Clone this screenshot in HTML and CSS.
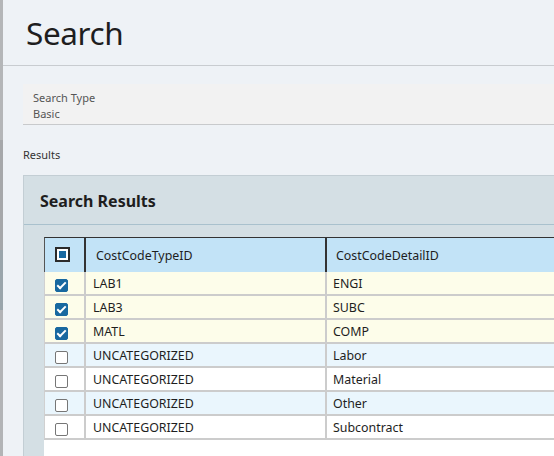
FILE: index.html
```html
<!DOCTYPE html>
<html>
<head>
<meta charset="utf-8">
<link rel="stylesheet" href="styles.css">
</head>
<body>
<div class="screen">
  <div class="backdrop"></div>
  <div class="panel">
    <div class="page-head">
      <h1 class="title">Search</h1>
    </div>
    <div class="content">
      <div class="field">
        <div class="field-label">Search Type</div>
        <div class="field-value">Basic</div>
      </div>
      <div class="section-label">Results</div>
      <div class="card">
        <div class="card-head">Search Results</div>
        <div class="card-body">
          <div class="grid-wrap">
            <table class="grid">
              <thead>
                <tr>
                  <th class="c-check"><span class="cb cb-partial"></span></th>
                  <th class="c-type">CostCodeTypeID</th>
                  <th class="c-detail">CostCodeDetailID</th>
                </tr>
              </thead>
              <tbody>
                <tr class="sel"><td class="c-check"><span class="cb cb-on"></span></td><td class="c-type">LAB1</td><td class="c-detail">ENGI</td></tr>
                <tr class="sel"><td class="c-check"><span class="cb cb-on"></span></td><td class="c-type">LAB3</td><td class="c-detail">SUBC</td></tr>
                <tr class="sel"><td class="c-check"><span class="cb cb-on"></span></td><td class="c-type">MATL</td><td class="c-detail">COMP</td></tr>
                <tr class="alt"><td class="c-check"><span class="cb"></span></td><td class="c-type">UNCATEGORIZED</td><td class="c-detail">Labor</td></tr>
                <tr><td class="c-check"><span class="cb"></span></td><td class="c-type">UNCATEGORIZED</td><td class="c-detail">Material</td></tr>
                <tr class="alt"><td class="c-check"><span class="cb"></span></td><td class="c-type">UNCATEGORIZED</td><td class="c-detail">Other</td></tr>
                <tr><td class="c-check"><span class="cb"></span></td><td class="c-type">UNCATEGORIZED</td><td class="c-detail">Subcontract</td></tr>
              </tbody>
            </table>
          </div>
        </div>
      </div>
    </div>
  </div>
</div>
</body>
</html>
```

FILE: styles.css
```css
html, body {
  margin: 0;
  padding: 0;
  width: 554px;
  height: 456px;
  overflow: hidden;
  background: #eef2f6;
  font-family: "Noto Sans", "Open Sans", sans-serif;
  color: #222;
}

.screen {
  display: flex;
  width: 554px;
  height: 456px;
  overflow: hidden;
}

.backdrop {
  flex: 0 0 3px;
  background: linear-gradient(to bottom, #b4b6b8 0, #b4b6b8 140px, #a6a8aa 140px, #a6a8aa 250px, #9aa5ab 250px, #9aa5ab 310px, #b2b4b6 310px, #b2b4b6 100%);
}

.panel {
  flex: 1 1 auto;
  min-width: 0;
  background: #eef2f6;
  display: flex;
  flex-direction: column;
}

.page-head {
  flex: 0 0 auto;
  height: 66px;
  border-bottom: 1px solid #c8ccd0;
  box-sizing: border-box;
  padding: 13px 0 0 23px;
}

.title {
  margin: 0;
  font-size: 31.5px;
  font-weight: 400;
  line-height: 40px;
  color: #1e1e1e;
  letter-spacing: -0.4px;
}

.content {
  flex: 1 1 auto;
  min-height: 0;
  display: flex;
  flex-direction: column;
  padding: 18px 0 0 20px;
}

.field {
  flex: 0 0 auto;
  background: #f2f2f2;
  border-bottom: 1px solid #c8cacc;
  height: 41px;
  box-sizing: border-box;
  padding: 6px 0 0 10px;
  font-size: 11px;
  line-height: 16px;
  color: #555;
}

.section-label {
  flex: 0 0 auto;
  margin-top: 22px;
  font-size: 11px;
  line-height: 16px;
  color: #333;
}

.card {
  flex: 1 1 auto;
  display: flex;
  flex-direction: column;
  margin-top: 12px;
  background: #d4dfe4;
  border-top: 1px solid #c3ced4;
  border-left: 1px solid #c3ced4;
}

.card-head {
  flex: 0 0 auto;
  height: 49px;
  box-sizing: border-box;
  border-bottom: 1px solid #a9c1cd;
  padding: 13px 0 0 16px;
  font-size: 16px;
  font-weight: 700;
  line-height: 24px;
  color: #1e1e1e;
}

.card-body {
  flex: 1 1 auto;
  display: flex;
  flex-direction: column;
  padding: 12px 0 0 20px;
}

.grid-wrap {
  flex: 1 1 auto;
  background: #fff;
}

.grid {
  border-collapse: separate;
  border-spacing: 0;
  background: #fff;
  width: 700px;
  font-size: 12.4px;
  table-layout: fixed;
}

.grid th, .grid td {
  box-sizing: border-box;
  padding: 0;
  text-align: left;
}

.grid th {
  background: #c2e3f7;
  height: 35px;
  font-weight: 400;
  border-top: 1px solid #333;
  color: #1e1e1e;
}

.grid th.c-check {
  border-left: 1px solid #555;
  border-right: 2px solid #333;
  padding-left: 10px;
}

.grid th.c-type {
  border-right: 2px solid #333;
  padding-left: 10px;
}

.grid th.c-detail {
  padding-left: 9px;
}

.grid td {
  height: 24px;
  border-bottom: 2px solid #cccccc;
  color: #1e1e1e;
}

.grid td.c-check {
  border-left: 1px solid #d0d0d0;
  border-right: 2px solid #cccccc;
  padding-left: 10px;
}

.grid td.c-type {
  padding-left: 7px;
  border-right: 2px solid #cccccc;
}

.grid td.c-detail {
  padding-left: 6px;
}

.grid tr.sel td { background: #fdfdea; }
.grid tr.alt td { background: #eaf6fd; }

.c-check { width: 42px; }
.c-type { width: 241px; }

.cb {
  display: inline-block;
  box-sizing: border-box;
  width: 13px;
  height: 13px;
  border: 1px solid #767676;
  border-radius: 2px;
  background: #fff;
  vertical-align: middle;
  position: relative;
  top: 1px;
}

.cb-on {
  background: #1868a0;
  border-color: #1868a0;
}

.cb-on::after {
  content: "";
  position: absolute;
  left: 3px;
  top: 0px;
  width: 3px;
  height: 7px;
  border: solid #fff;
  border-width: 0 2px 2px 0;
  transform: rotate(45deg);
}

.cb-partial {
  width: 15px;
  height: 15px;
  border: 2px solid #2b2b2b;
  border-radius: 0;
  background: #fff;
  top: -2px;
}

.cb-partial::after {
  content: "";
  position: absolute;
  left: 2px;
  top: 2px;
  width: 7px;
  height: 7px;
  background: #1868a0;
}
```
